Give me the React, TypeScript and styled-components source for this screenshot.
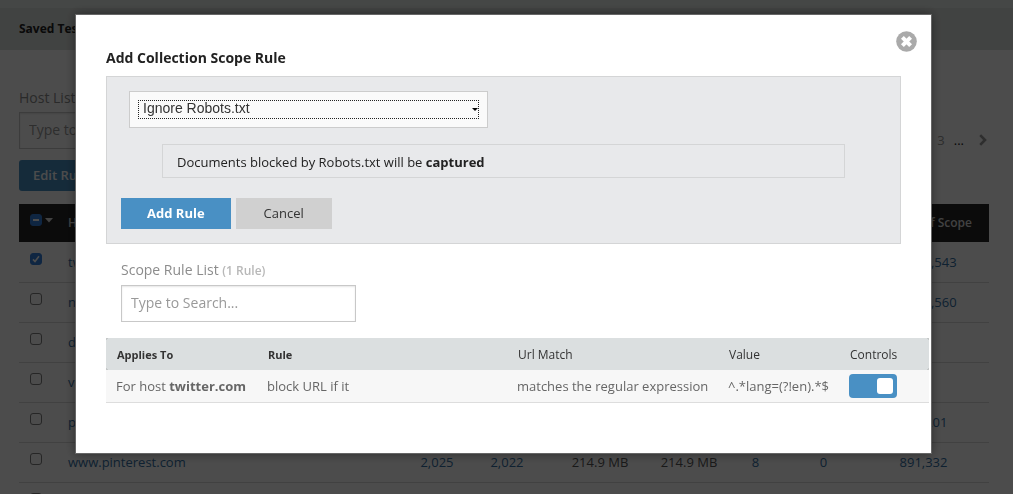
import React from "react";
import styled, { createGlobalStyle, css } from "styled-components";

const GlobalStyle = createGlobalStyle`
  *, *::before, *::after { box-sizing: border-box; }
  body {
    margin: 0;
    background: #fff;
    color: #222;
    font-family: "Open Sans", "Noto Sans", sans-serif;
    font-size: 13px;
    line-height: 20px;
  }
  button, input { font-family: inherit; }
`;

const Page = styled.div`
  height: 100vh;
  overflow: hidden;
`;

const TopStrip = styled.div`
  height: 8px;
  background: #e8eeea;
`;

const TitleBar = styled.header`
  height: 42px;
  padding: 0 19px;
  display: flex;
  align-items: center;
  background: #dbe0dd;
  font-size: 12px;
  font-weight: 700;
`;

const Main = styled.main`
  padding: 38px 24px 0 19px;
`;

const Toolbar = styled.div`
  display: flex;
  justify-content: space-between;
  align-items: flex-start;
  margin-bottom: 13px;
`;

const FilterGroup = styled.div`
  display: flex;
  flex-direction: column;
  align-items: flex-start;
`;

const FieldLabel = styled.label`
  font-size: 14px;
  line-height: 20px;
  color: #8c8c8c;
  margin-bottom: 4px;
`;

const Count = styled.small`
  font-size: 12px;
  font-weight: 600;
  color: #b8b8b8;
`;

const SearchInput = styled.input`
  width: 235px;
  height: 37px;
  padding: 0 9px 2px;
  border: 1px solid #c8c8c8;
  box-shadow: inset 0 1px 2px rgba(0, 0, 0, 0.1);
  background: #fff;
  font-size: 14px;
  &::placeholder { color: #999; opacity: 1; }
`;

const Button = styled.button<{ $variant?: "primary" | "secondary"; $round?: boolean }>`
  height: 31px;
  border: 0;
  border-radius: ${(p) => (p.$round ? "3px" : "0")};
  font-size: 13px;
  cursor: pointer;
  ${(p) =>
    p.$variant === "secondary"
      ? css`padding: 0 28px 2px; background: #d0d0d0; color: #333; font-weight: 400;`
      : css`padding: 0 26px 2px; background: #4990c4; color: #fff; font-weight: 700;`}
`;

const EditButton = styled(Button)`
  margin-top: 11px;
  padding: 0 14px 2px;
  font-weight: 600;
`;

const Pager = styled.nav`
  display: flex;
  align-items: center;
  gap: 9px;
  margin-top: 42px;
  padding-right: 2px;
`;

const PageLink = styled.a`
  display: flex;
  color: #999;
  text-decoration: none;
`;

const NextLink = styled(PageLink)`
  margin-left: 6px;
`;

const HostTable = styled.table`
  width: 100%;
  table-layout: fixed;
  border-collapse: collapse;
  th {
    height: 38px;
    padding: 0;
    background: #262626;
    color: #ddd;
    font-size: 12px;
    font-weight: 600;
    text-align: left;
  }
  th:last-child { text-align: right; padding-right: 17px; }
  td {
    height: 40px;
    padding: 0;
    border-bottom: 1px solid #dadada;
    color: #555;
    text-align: center;
    vertical-align: middle;
  }
  td:nth-child(2) { text-align: left; }
  td:last-child { padding-left: 2px; }
`;

const CheckCell = styled.span`
  display: flex;
  align-items: center;
  gap: 3px;
  padding: 0 0 6px 11px;
`;

const CheckWrap = styled.span`
  position: relative;
  display: block;
  width: 12px;
  height: 12px;
  svg {
    position: absolute;
    inset: 0;
    pointer-events: none;
  }
`;

const CheckInput = styled.input<{ $filled?: boolean }>`
  appearance: none;
  display: block;
  width: 12px;
  height: 12px;
  margin: 0;
  border: 1px solid ${(p) => (p.$filled ? "#3480dc" : "#808080")};
  border-radius: 3px;
  background: ${(p) => (p.$filled ? "#3480dc" : "transparent")};
`;

const DataLink = styled.a`
  color: #336fa4;
  text-decoration: none;
`;

const Overlay = styled.div`
  position: fixed;
  inset: 0;
  padding: 14px 81px 0 75px;
  background: rgba(0, 0, 0, 0.7);
`;

const Modal = styled.section`
  position: relative;
  padding: 33px 30px 50px;
  border: 1px solid #666;
  background: #fff;
  box-shadow: 0 0 10px rgba(0, 0, 0, 0.4);
`;

const CloseButton = styled.button`
  position: absolute;
  top: 16px;
  right: 14px;
  width: 21px;
  height: 21px;
  padding: 0;
  border: 0;
  background: none;
  cursor: pointer;
  svg { display: block; }
`;

const ModalTitle = styled.h2`
  margin: 0 0 8px;
  font-size: 14px;
  line-height: 20px;
  font-weight: 700;
`;

const RuleForm = styled.form`
  padding: 14px;
  border: 1px solid #d4d5d6;
  background: #e8e9eb;
`;

const SelectBox = styled.div`
  position: relative;
  width: 359px;
  height: 37px;
  margin-left: 8px;
  padding: 8px;
  border: 1px solid #ccc;
  background: #fafafa;
  svg {
    position: absolute;
    top: 16px;
    right: 9px;
    pointer-events: none;
  }
`;

const Select = styled.select`
  appearance: none;
  display: block;
  width: 100%;
  height: 19px;
  padding: 0 0 2px 4px;
  border: 1px dotted #222;
  background: transparent;
  color: #333;
  font-family: "Liberation Sans", Arial, sans-serif;
  font-size: 14px;
  line-height: 15px;
`;

const Notice = styled.p`
  margin: 16px 41px 20px;
  padding: 7px 14px 7px;
  height: 34px;
  line-height: 20px;
  border: 1px solid #d4d5d6;
`;

const Actions = styled.div`
  display: flex;
  gap: 5px;
`;

const RuleFilter = styled(FilterGroup)`
  padding: 16px 15px;
`;

const RuleTableFrame = styled.div`
  margin-right: -28px;
`;

const RuleTable = styled.table`
  width: 100%;
  table-layout: fixed;
  border-collapse: separate;
  border-spacing: 0;
  th {
    height: 32px;
    padding: 2px 0 0 11px;
    background: #dbdfe0;
    color: #333;
    font-size: 12px;
    font-weight: 400;
    text-align: left;
  }
  th:nth-child(-n + 2) { font-size: 11px; font-weight: 700; }
  thead tr { background: #333; }
  th:first-child { border-radius: 2px 0 0 2px; }
  th:last-child { border-radius: 0 2px 2px 0; }
  td {
    height: 33px;
    padding: 0 0 0 10px;
    border-bottom: 1px solid #ddd;
    background: #f7f7f7;
    color: #666;
    white-space: nowrap;
  }
`;

const Toggle = styled.input`
  appearance: none;
  display: block;
  width: 48px;
  height: 24px;
  margin: 0;
  padding: 4px;
  border-radius: 4px;
  background: #4990c4;
  cursor: pointer;
  &::before {
    content: "";
    display: block;
    width: 16px;
    height: 16px;
    border-radius: 3px;
    background: #fff;
  }
  &:checked::before { margin-left: 24px; }
`;

type HostRow = { host: string; docs?: string; fresh?: string; size?: string; newSize?: string; queued?: string; blocked?: string; out: string; checked?: boolean };

const hosts: HostRow[] = [
  { host: "tw", out: "10,234,543", checked: true },
  { host: "n", out: "10,234,560" },
  { host: "d", out: "0" },
  { host: "v", out: "0" },
  { host: "p", out: "412,201" },
  { host: "www.pinterest.com", docs: "2,025", fresh: "2,022", size: "214.9 MB", newSize: "214.9 MB", queued: "8", blocked: "0", out: "891,332" },
  { host: "", out: "" },
];

function Check({ checked, mixed, label }: { checked?: boolean; mixed?: boolean; label: string }) {
  return (
    <CheckWrap>
      <CheckInput type="checkbox" defaultChecked={checked} $filled={checked || mixed} aria-label={label} />
      {checked && (
        <svg width="12" height="12" viewBox="0 0 12 12" fill="none" stroke="#fff" strokeWidth="1.6">
          <path d="M3 6.4 5 8.6 9 3.2" />
        </svg>
      )}
      {mixed && (
        <svg width="12" height="12" viewBox="0 0 12 12" fill="#fff">
          <rect x="3" y="5" width="6" height="2" />
        </svg>
      )}
    </CheckWrap>
  );
}

export default function App() {
  return (
    <>
      <GlobalStyle />
      <Page>
        <TopStrip />
        <TitleBar>Saved Test</TitleBar>
        <Main>
          <Toolbar>
            <FilterGroup>
              <FieldLabel htmlFor="host-search">Host List</FieldLabel>
              <SearchInput id="host-search" placeholder="Type to Search..." />
              <EditButton type="button" $round>Edit Rules</EditButton>
            </FilterGroup>
            <Pager aria-label="Pages">
              <PageLink href="#3">3</PageLink>
              <span>...</span>
              <NextLink href="#next" aria-label="Next page">
                <svg width="8" height="12" viewBox="0 0 8 12" fill="none" stroke="#999" strokeWidth="2.6">
                  <path d="M1.2 1.2 6 6 1.2 10.8" />
                </svg>
              </NextLink>
            </Pager>
          </Toolbar>
          <HostTable>
            <colgroup>
              <col width={49} />
              <col />
              <col width={70} />
              <col width={70} />
              <col width={116} />
              <col width={62} />
              <col width={71} />
              <col width={65} />
              <col width={133} />
            </colgroup>
            <thead>
              <tr>
                <th>
                  <CheckCell>
                    <Check mixed label="Select all hosts" />
                    <svg width="8" height="5" viewBox="0 0 8 5" fill="#ddd"><path d="M0 0h8L4 4.4z" /></svg>
                  </CheckCell>
                </th>
                <th>Host</th>
                <th colSpan={6} />
                <th>Out of Scope</th>
              </tr>
            </thead>
            <tbody>
              {hosts.map((row, i) => (
                <tr key={i}>
                  <td><CheckCell><Check checked={row.checked} label={`Select ${row.host}`} /></CheckCell></td>
                  <td><DataLink href="#host">{row.host}</DataLink></td>
                  <td><DataLink href="#docs">{row.docs}</DataLink></td>
                  <td><DataLink href="#new">{row.fresh}</DataLink></td>
                  <td>{row.size}</td>
                  <td>{row.newSize}</td>
                  <td><DataLink href="#queued">{row.queued}</DataLink></td>
                  <td><DataLink href="#blocked">{row.blocked}</DataLink></td>
                  <td><DataLink href="#out">{row.out}</DataLink></td>
                </tr>
              ))}
            </tbody>
          </HostTable>
        </Main>
      </Page>

      <Overlay>
        <Modal role="dialog" aria-labelledby="modal-title">
          <CloseButton type="button" aria-label="Close">
            <svg width="21" height="21" viewBox="0 0 21 21">
              <circle cx="10.5" cy="10.5" r="10.3" fill="#aaa" />
              <path d="M6.4 6.4 14.6 14.6M14.6 6.4 6.4 14.6" stroke="#fff" strokeWidth="4" />
            </svg>
          </CloseButton>
          <ModalTitle id="modal-title">Add Collection Scope Rule</ModalTitle>
          <RuleForm onSubmit={(e) => e.preventDefault()}>
            <SelectBox>
              <Select aria-label="Rule type" defaultValue="robots">
                <option value="robots">Ignore Robots.txt</option>
              </Select>
              <svg width="6" height="3" viewBox="0 0 6 3"><path d="M0 0h6L3 3z" fill="#000" /></svg>
            </SelectBox>
            <Notice>Documents blocked by Robots.txt will be <strong>captured</strong></Notice>
            <Actions>
              <Button type="submit">Add Rule</Button>
              <Button type="button" $variant="secondary">Cancel</Button>
            </Actions>
          </RuleForm>
          <RuleFilter>
            <FieldLabel htmlFor="rule-search">Scope Rule List <Count>(1 Rule)</Count></FieldLabel>
            <SearchInput id="rule-search" placeholder="Type to Search..." />
          </RuleFilter>
          <RuleTableFrame>
            <RuleTable>
              <colgroup>
                <col width={151} />
                <col />
                <col width={211} />
                <col width={121} />
                <col width={90} />
              </colgroup>
              <thead>
                <tr>
                  <th>Applies To</th>
                  <th>Rule</th>
                  <th>Url Match</th>
                  <th>Value</th>
                  <th>Controls</th>
                </tr>
              </thead>
              <tbody>
                <tr>
                  <td>For host <strong>twitter.com</strong></td>
                  <td>block URL if it</td>
                  <td>matches the regular expression</td>
                  <td>^.*lang=(?!en).*$</td>
                  <td><Toggle type="checkbox" defaultChecked aria-label="Rule enabled" /></td>
                </tr>
              </tbody>
            </RuleTable>
          </RuleTableFrame>
        </Modal>
      </Overlay>
    </>
  );
}
